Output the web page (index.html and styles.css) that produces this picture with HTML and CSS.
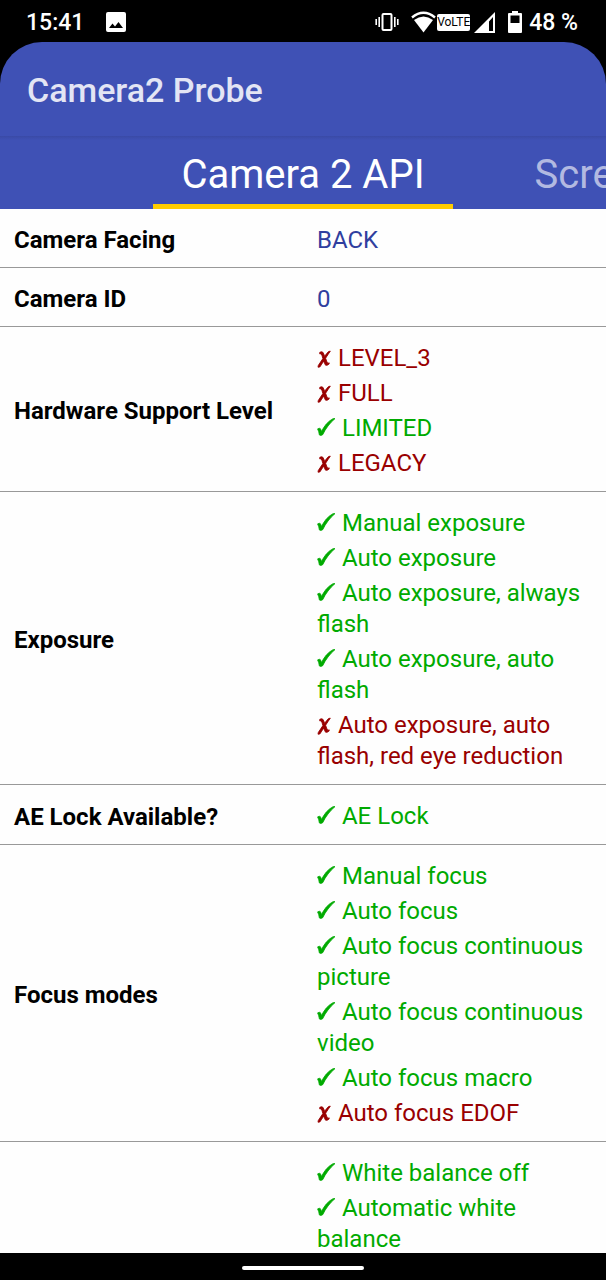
FILE: index.html
```html
<!DOCTYPE html>
<html lang="en">
<head>
    <meta charset="UTF-8">
    <meta name="viewport" content="width=device-width, initial-scale=1.0">
    <title>Camera2 Probe</title>
    <link rel="stylesheet" href="styles.css">
</head>
<body>
    <!-- Marks used in the details table -->
    <svg class="sprite" width="0" height="0">
        <symbol id="check" viewBox="0 0 19 18">
            <path fill="currentColor" stroke="currentColor" stroke-width=".8" stroke-linejoin="round" d="M18 .600L16 .700Q12.500 2.500 9.300 6 6.200 9.800 4.500 13.600 4.200 12 3.400 10.700 2.600 9.700.600 10.900 1.800 13 2.400 17 3.800 18 5.700 16.700 7.600 12.500 11 8 14.400 3.600 18 .600z"/>
        </symbol>
        <symbol id="cross" viewBox="0 0 15 18">
            <path fill="currentColor" stroke="currentColor" stroke-width=".9" stroke-linejoin="round" d="M2.800 2.300Q4.500 1.300 5.800 2.200 6.800 3.600 7.600 6.400 9.800 3.200 11.600 1.500L13.300 1.200Q11.300 4 8.600 8.200 9.500 11.400 10.700 13.300L12.300 12.900 11.800 14.300Q10.400 15.600 8.600 15.200 7.500 13.800 6.700 11 4.600 14.300 2.900 16.900L1 17.200 1.300 15.500Q3.600 12 5.900 8.600 5.200 5.400 4.100 3.700L2.800 4z"/>
        </symbol>
    </svg>

    <div class="status-bar">
        <span class="clock">15:41</span>
        <svg class="icon-photo" width="20" height="20" viewBox="0 0 20 20">
            <path fill="#fff" fill-rule="evenodd" d="M2 0h16a2 2 0 0 1 2 2v16a2 2 0 0 1-2 2H2a2 2 0 0 1-2-2V2a2 2 0 0 1 2-2zM3 16h14l-4.500-6-3.500 4.500-2.500-3z"/>
        </svg>
        <div class="status-icons">
            <svg class="icon-vibrate" width="24" height="18" viewBox="0 0 24 18">
                <rect x="7.500" y="1" width="9" height="16" rx="1" fill="none" stroke="#fff" stroke-width="2"/>
                <path d="M4.200 4v10M1.200 6v6M19.800 4v10M22.800 6v6" stroke="#fff" stroke-width="1.600"/>
            </svg>
            <svg class="icon-wifi" width="25" height="22" viewBox="0 0 25 22">
                <path d="M1 6.500Q12.500-3 24 6.500" fill="none" stroke="#fff" stroke-width="2.400"/>
                <path fill="#fff" d="M3 9Q12.500 2 22 9L12.500 21.500z"/>
            </svg>
            <span class="volte">VoLTE</span>
            <svg class="icon-signal" width="21" height="21" viewBox="0 0 21 21">
                <path fill="#fff" fill-rule="evenodd" d="M0 21L21 0v21zM15 9.500V19H19V5z"/>
            </svg>
            <svg class="icon-battery" width="14" height="22" viewBox="0 0 14 22">
                <path fill="#fff" fill-rule="evenodd" d="M4 0h6v2h3a1 1 0 0 1 1 1v18a1 1 0 0 1-1 1H1a1 1 0 0 1-1-1V3a1 1 0 0 1 1-1h3zM2.500 4.500V12h9V4.500z"/>
            </svg>
            <span class="battery-level">48 %</span>
        </div>
    </div>

    <header class="app-bar">
        <h1 class="title">Camera2 Probe</h1>
    </header>

    <nav class="tabs">
        <button class="tab active">Camera 2 API</button>
        <button class="tab">Screen</button>
    </nav>

    <main class="content">
        <table class="specs">
            <tbody>
                <tr>
                    <th scope="row">Camera Facing</th>
                    <td>BACK</td>
                </tr>
                <tr>
                    <th scope="row">Camera ID</th>
                    <td>0</td>
                </tr>
                <tr>
                    <th scope="row">Hardware Support Level</th>
                    <td>
                        <ul>
                            <li class="no"><svg class="cross"><use href="#cross"/></svg> LEVEL_3</li>
                            <li class="no"><svg class="cross"><use href="#cross"/></svg> FULL</li>
                            <li class="yes"><svg class="check"><use href="#check"/></svg> LIMITED</li>
                            <li class="no"><svg class="cross"><use href="#cross"/></svg> LEGACY</li>
                        </ul>
                    </td>
                </tr>
                <tr>
                    <th scope="row">Exposure</th>
                    <td>
                        <ul>
                            <li class="yes"><svg class="check"><use href="#check"/></svg> Manual exposure</li>
                            <li class="yes"><svg class="check"><use href="#check"/></svg> Auto exposure</li>
                            <li class="yes"><svg class="check"><use href="#check"/></svg> Auto exposure, always flash</li>
                            <li class="yes"><svg class="check"><use href="#check"/></svg> Auto exposure, auto flash</li>
                            <li class="no"><svg class="cross"><use href="#cross"/></svg> Auto exposure, auto flash, red eye reduction</li>
                        </ul>
                    </td>
                </tr>
                <tr>
                    <th scope="row">AE Lock Available?</th>
                    <td>
                        <ul>
                            <li class="yes"><svg class="check"><use href="#check"/></svg> AE Lock</li>
                        </ul>
                    </td>
                </tr>
                <tr>
                    <th scope="row">Focus modes</th>
                    <td>
                        <ul>
                            <li class="yes"><svg class="check"><use href="#check"/></svg> Manual focus</li>
                            <li class="yes"><svg class="check"><use href="#check"/></svg> Auto focus</li>
                            <li class="yes"><svg class="check"><use href="#check"/></svg> Auto focus continuous picture</li>
                            <li class="yes"><svg class="check"><use href="#check"/></svg> Auto focus continuous video</li>
                            <li class="yes"><svg class="check"><use href="#check"/></svg> Auto focus macro</li>
                            <li class="no"><svg class="cross"><use href="#cross"/></svg> Auto focus EDOF</li>
                        </ul>
                    </td>
                </tr>
                <tr>
                    <th scope="row"></th>
                    <td>
                        <ul>
                            <li class="yes"><svg class="check"><use href="#check"/></svg> White balance off</li>
                            <li class="yes"><svg class="check"><use href="#check"/></svg> Automatic white balance</li>
                        </ul>
                    </td>
                </tr>
            </tbody>
        </table>
    </main>

    <footer class="nav-bar">
        <div class="home-handle"></div>
    </footer>
</body>
</html>
```
FILE: styles.css
```css
* {
    box-sizing: border-box;
    margin: 0;
    padding: 0;
}

body {
    background: #000;
    height: 100vh;
    display: flex;
    flex-direction: column;
    overflow: hidden;
    font-family: Roboto, sans-serif;
    font-size: 24px;
}

.sprite {
    position: absolute;
}

/* Status bar */
.status-bar {
    height: 42px;
    flex: none;
    display: flex;
    align-items: center;
    padding: 2px 28px 0 26px;
    color: #fff;
    font-size: 23px;
    font-weight: 500;
}

.icon-photo {
    margin-left: 22px;
}

.status-icons {
    margin-left: auto;
    display: flex;
    align-items: center;
}

.icon-wifi {
    margin-left: 12px;
}

.volte {
    margin: 0 4px 0 1px;
    border-radius: 2px;
    background: #fff;
    color: #000;
    font-size: 12px;
    font-weight: 400;
    line-height: 17px;
}

.icon-battery {
    margin: 0 7px 0 13px;
}

/* App bar and tabs */
.app-bar {
    flex: none;
    height: 94px;
    padding: 2px 27px 0;
    display: flex;
    align-items: center;
    background: #3f51b5;
    border-radius: 42px 42px 0 0;
}

.title {
    color: #e3e5f4;
    font-size: 34px;
    font-weight: 500;
}

.tabs {
    flex: none;
    height: 73px;
    display: grid;
    grid-template-columns: 1fr auto 1fr;
    column-gap: 54px;
    background: linear-gradient(#3a4aa6, #3f51b5 4px);
    overflow: hidden;
}

.tab {
    min-width: 0;
    padding: 9px 0 0;
    border: none;
    border-bottom: 5px solid transparent;
    background: none;
    color: #b2b9e1;
    font: 40px Roboto, sans-serif;
    text-align: left;
}

.tab:last-child {
    padding-left: 28px;
}

.tab.active {
    grid-column: 2;
    padding: 9px 28px 0;
    border-bottom-color: #fc0;
    color: #fff;
}

/* Camera details */
.content {
    flex: 1;
    min-height: 0;
    overflow: hidden;
    background: #fefefe;
}

.specs {
    width: 100%;
    table-layout: fixed;
    border-spacing: 0;
}

.specs th,
.specs td {
    padding: 16px 14px 11px;
    border-bottom: 1px solid #999;
    line-height: 31px;
    text-align: left;
    vertical-align: middle;
}

.specs th {
    color: #000;
    font-weight: 700;
}

.specs td {
    color: #303f9f;
}

.specs ul {
    display: flex;
    flex-direction: column;
    gap: 4px;
    padding-bottom: 1px;
    list-style: none;
}

.yes {
    color: #0a0;
}

.no {
    color: #900;
}

.check {
    width: 19px;
    height: 18px;
}

.cross {
    width: 15px;
    height: 18px;
    vertical-align: -2px;
}

/* Gesture navigation */
.nav-bar {
    flex: none;
    height: 27px;
    display: flex;
    align-items: center;
    justify-content: center;
    padding-top: 3px;
}

.home-handle {
    width: 20%;
    height: 4px;
    border-radius: 2px;
    background: #fff;
}
```
